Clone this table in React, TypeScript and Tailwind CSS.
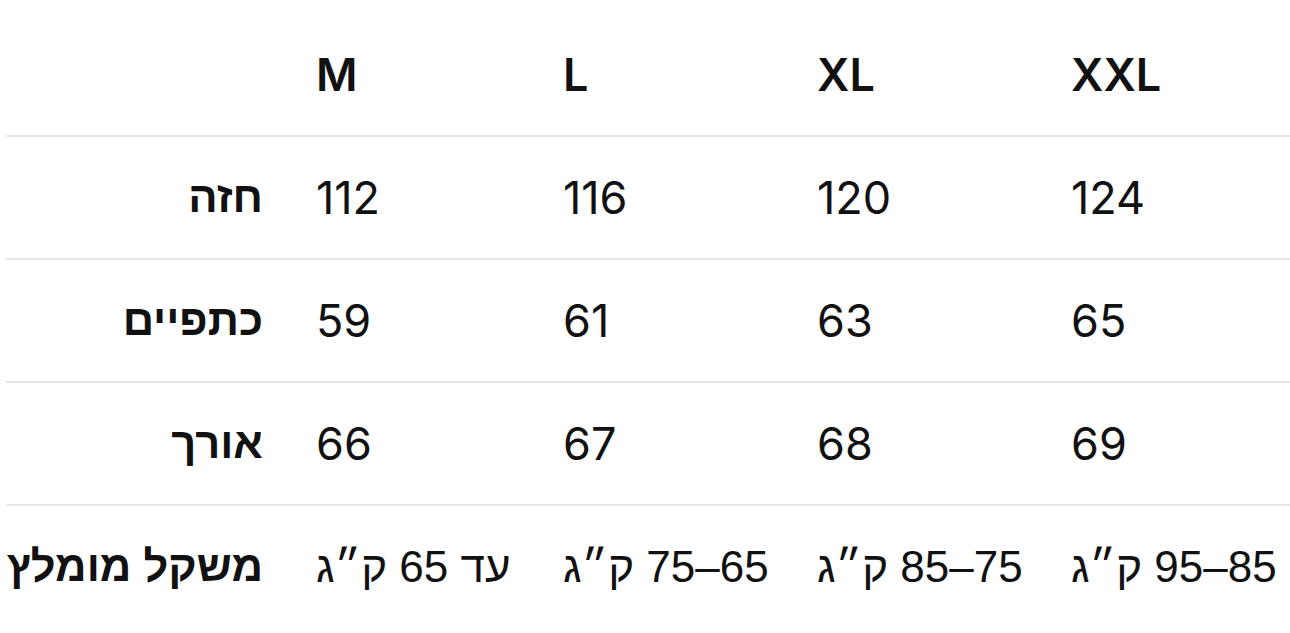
const sizes = ['M', 'L', 'XL', 'XXL'];

const rows = [
  { label: 'חזה', values: ['112', '116', '120', '124'] },
  { label: 'כתפיים', values: ['59', '61', '63', '65'] },
  { label: 'אורך', values: ['66', '67', '68', '69'] },
];

const weights = ['עד 65 ק״ג', '65–75 ק״ג', '75–85 ק״ג', '85–95 ק״ג'];

const grid = 'grid grid-cols-[283px_247px_254px_254px_1fr]';
const latin = "font-['Inter','Liberation_Sans',sans-serif]";
const hebrew = "font-['Liberation_Sans','DejaVu_Sans',sans-serif]";

function Label({ text }: { text: string }) {
  return (
    <div className={`flex items-center justify-end pr-[26px] text-[43.5px] font-bold whitespace-nowrap ${hebrew}`}>
      <span dir="rtl">{text}</span>
    </div>
  );
}

export default function App() {
  return (
    <div className="min-h-[633px] w-[1290px] bg-white pl-[6px] text-[45px] leading-none text-[#111111] overflow-hidden">
      {/* header */}
      <div className={`${grid} h-[137px] border-b-2 border-[#e6e6e6] pt-[13px]`}>
        <div />
        {sizes.map((s) => (
          <div key={s} className={`flex items-center pl-[27px] font-semibold ${latin}`}>
            {s}
          </div>
        ))}
      </div>

      {rows.map((row) => (
        <div key={row.label} className={`${grid} h-[123px] border-b-2 border-[#e6e6e6]`}>
          <Label text={row.label} />
          {row.values.map((v, i) => (
            <div key={i} className={`flex items-center pl-[27px] ${latin}`}>
              {v}
            </div>
          ))}
        </div>
      ))}

      <div className={`${grid} h-[121px]`}>
        <Label text="משקל מומלץ" />
        {weights.map((w) => (
          <div key={w} className={`flex items-center pl-[27px] text-[44px] ${hebrew}`}>
            <span dir="rtl" className="whitespace-nowrap">{w}</span>
          </div>
        ))}
      </div>
    </div>
  );
}
